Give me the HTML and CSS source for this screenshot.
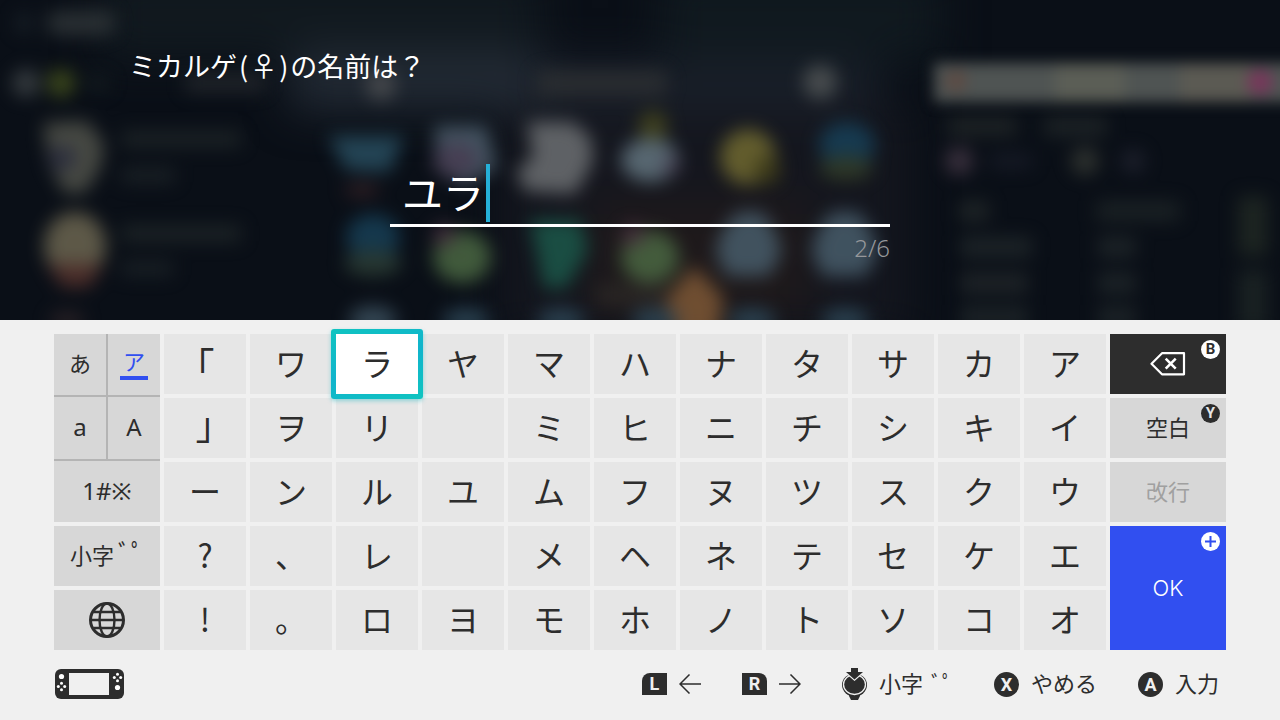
FILE: index.html
```
<!DOCTYPE html>
<html lang="ja">
<head>
<meta charset="utf-8">
<meta name="viewport" content="width=device-width, initial-scale=1">
<title>ミカルゲの名前入力</title>
<link rel="stylesheet" href="styles.css">
</head>
<body>
<main class="screen">
  <section class="prompt">
    <svg class="backdrop" viewBox="0 0 1280 320" preserveAspectRatio="xMidYMin slice" aria-hidden="true">
      <defs>
        <filter id="soft" x="-20%" y="-20%" width="140%" height="140%" color-interpolation-filters="sRGB"><feGaussianBlur stdDeviation="9"/></filter>
        <filter id="bar" x="-20%" y="-100%" width="140%" height="300%" color-interpolation-filters="sRGB"><feGaussianBlur stdDeviation="7"/></filter>
        <filter id="wide" x="-30%" y="-60%" width="160%" height="220%" color-interpolation-filters="sRGB"><feGaussianBlur stdDeviation="22"/></filter>
      </defs>
      <rect width="1280" height="320" fill="#0a0f17"/>
      <g filter="url(#wide)">
        <rect x="100" y="-30" width="440" height="90" fill="#11191f"/>
        <rect x="660" y="-30" width="280" height="90" fill="#10191f"/>
        <rect x="290" y="50" width="250" height="60" fill="#222a34"/>
        <rect x="540" y="60" width="340" height="50" fill="#191f29"/>
        <rect x="500" y="110" width="410" height="230" fill="#14161e"/>
        <rect x="590" y="200" width="220" height="120" fill="#1e191b"/>
      </g>
      <g filter="url(#soft)" opacity=".86">
        <rect x="16" y="14" width="16" height="18" fill="#1a2229"/>
        <rect x="47" y="11" width="68" height="24" rx="8" fill="#2f3538"/>
        <circle cx="26" cy="83" r="14" fill="#3c4245"/>
        <circle cx="61" cy="83" r="14" fill="#43501d"/>
        <rect x="87" y="75" width="22" height="16" fill="#141c20"/>
        <rect x="185" y="74" width="80" height="18" fill="#24282d"/>
        <circle cx="381" cy="85" r="15" fill="#4b4d50"/>
        <rect x="536" y="70" width="132" height="26" rx="8" fill="#2c2f32"/>
        <circle cx="820" cy="82" r="17" fill="#505455"/>

        <path d="M43 123l44-2 17 22-3 24-16 26-21 0-15-29z" fill="#50524a"/>
        <ellipse cx="62" cy="158" rx="13" ry="12" fill="#303244"/>
        <ellipse cx="75" cy="246" rx="31" ry="34" fill="#6b6550"/>
        <path d="M47 264h56l-13 23H62z" fill="#57332d"/>
        <ellipse cx="67" cy="320" rx="18" ry="8" fill="#312629"/>
        <rect x="121" y="131" width="120" height="16" fill="#1f2628"/>
        <rect x="121" y="168" width="54" height="15" fill="#1d2428"/>
        <rect x="121" y="225" width="120" height="17" fill="#1f2628"/>
        <rect x="121" y="261" width="52" height="15" fill="#1c2327"/>

        <path d="M328 136h76l-14 36-44-2z" fill="#284d5f"/>
        <ellipse cx="362" cy="190" rx="18" ry="7" fill="#382327"/>
        <path d="M434 126h52l11 42-33 18-26-15z" fill="#4d5f6d"/>
        <ellipse cx="456" cy="160" rx="23" ry="18" fill="#50475d"/>
        <path d="M527 122h46l18 16 2 24-18 32-50-3-9-20 17-14z" fill="#6b6e71"/>
        <circle cx="653" cy="126" r="15" fill="#45461e"/>
        <ellipse cx="650" cy="160" rx="29" ry="22" fill="#62747e"/>
        <circle cx="671" cy="165" r="9" fill="#534c60"/>
        <circle cx="748" cy="157" r="28" fill="#706930"/>
        <ellipse cx="767" cy="170" rx="13" ry="14" fill="#45421a"/>
        <ellipse cx="847" cy="145" rx="28" ry="23" fill="#174058"/>
        <ellipse cx="846" cy="168" rx="27" ry="12" fill="#333e29"/>

        <ellipse cx="373" cy="237" rx="27" ry="23" fill="#173f56"/>
        <ellipse cx="373" cy="263" rx="29" ry="13" fill="#2c3e36"/>
        <ellipse cx="462" cy="257" rx="29" ry="26" fill="#4a6742"/>
        <circle cx="444" cy="235" r="11" fill="#4b3342"/>
        <path d="M530 220h50l8 30-22 38h-22z" fill="#1b5749"/>
        <ellipse cx="650" cy="257" rx="29" ry="26" fill="#4a6742"/>
        <circle cx="633" cy="235" r="11" fill="#4b3342"/>
        <path d="M738 212h24q18 22 19 42l-12 22h-42l-11-22q1-22 22-42z" fill="#475c6a"/>
        <path d="M832 212h26q18 22 19 42l-12 22h-42l-11-22q1-22 20-42z" fill="#475c6a"/>
        <path d="M694 266l30 32-7 42h-44l-7-42z" fill="#7d5735"/>
        <rect x="596" y="284" width="70" height="22" fill="#2b2725"/>
        <ellipse cx="373" cy="320" rx="24" ry="14" fill="#3b505e"/>
        <ellipse cx="466" cy="320" rx="24" ry="12" fill="#2e4858"/>
        <ellipse cx="561" cy="320" rx="24" ry="12" fill="#2e4858"/>
        <ellipse cx="655" cy="320" rx="24" ry="12" fill="#2e4858"/>
        <ellipse cx="752" cy="320" rx="24" ry="12" fill="#2e4858"/>
        <ellipse cx="845" cy="320" rx="24" ry="12" fill="#2e4858"/>

        <rect x="947" y="117" width="70" height="19" fill="#212627"/>
        <rect x="1044" y="117" width="63" height="19" fill="#202628"/>
        <circle cx="959" cy="161" r="14" fill="#423644"/>
        <rect x="990" y="154" width="42" height="14" fill="#191d29"/>
        <circle cx="1085" cy="161" r="14" fill="#343833"/>
        <circle cx="1133" cy="161" r="12" fill="#20232f"/>
        <rect x="959" y="201" width="30" height="20" fill="#222829"/>
        <rect x="960" y="237" width="72" height="20" fill="#20272a"/>
        <rect x="960" y="273" width="68" height="20" fill="#22272a"/>
        <rect x="960" y="307" width="68" height="20" fill="#20272a"/>
        <rect x="1096" y="201" width="84" height="20" fill="#1d2426"/>
        <rect x="1098" y="237" width="38" height="20" fill="#20272a"/>
        <rect x="1098" y="273" width="38" height="20" fill="#20272a"/>
        <rect x="1098" y="307" width="38" height="20" fill="#20272a"/>
        <rect x="1238" y="196" width="30" height="60" fill="#202823"/>
        <rect x="1238" y="270" width="30" height="60" fill="#1c2424"/>
      </g>
      <g filter="url(#bar)">
        <rect x="934" y="63" width="380" height="39" fill="#4f5453"/>
        <rect x="1055" y="64" width="70" height="37" fill="#5b5e56"/>
        <rect x="1180" y="64" width="70" height="37" fill="#5b5a53"/>
        <circle cx="956" cy="81" r="11" fill="#5c4b44"/>
        <circle cx="1260" cy="82" r="13" fill="#75385a"/>
      </g>
    </svg>
    <label class="title" for="nickname">ミカルゲ<span class="paren">(</span>♀<span class="paren">)</span>の名前は？</label>
    <div class="field">
      <div class="entry"><input class="entry-text" id="nickname" type="text" maxlength="6" value="ユラ" autocomplete="off"><span class="caret"></span></div>
      <div class="count">2/6</div>
    </div>
  </section>

  <section class="keyboard" aria-label="キーボード">
    <div class="side">
      <div class="modes">
        <button class="mode" type="button">あ</button>
        <button class="mode mode-on" type="button" aria-pressed="true"><span class="mode-mark">ア</span></button>
        <button class="mode mode-latin" type="button">a</button>
        <button class="mode mode-latin" type="button">A</button>
        <button class="mode mode-latin mode-wide" type="button">1#※</button>
      </div>
      <button class="key key-side" type="button"><span>小字<span class="marks">ﾞﾟ</span></span></button>
      <button class="key key-icon" type="button" aria-label="言語">
        <svg width="36" height="36" viewBox="0 0 36 36" fill="none" stroke="#2d2d2d" stroke-width="2.4"><circle cx="18" cy="18" r="16.5" stroke-width="3"/><ellipse cx="18" cy="18" rx="7.5" ry="16.5"/><path d="M1.500 18h33M4.500 10h27M4.500 26h27"/></svg>
      </button>
    </div>

    <div class="kana">
      <button class="key key-bracket" type="button">｢</button><button class="key" type="button">ワ</button><button class="key key-focus" type="button">ラ</button><button class="key" type="button">ヤ</button><button class="key" type="button">マ</button><button class="key" type="button">ハ</button><button class="key" type="button">ナ</button><button class="key" type="button">タ</button><button class="key" type="button">サ</button><button class="key" type="button">カ</button><button class="key" type="button">ア</button>
      <button class="key key-bracket key-close" type="button">｣</button><button class="key" type="button">ヲ</button><button class="key" type="button">リ</button><button class="key" type="button" disabled aria-label="空き"></button><button class="key" type="button">ミ</button><button class="key" type="button">ヒ</button><button class="key" type="button">ニ</button><button class="key" type="button">チ</button><button class="key" type="button">シ</button><button class="key" type="button">キ</button><button class="key" type="button">イ</button>
      <button class="key" type="button">ー</button><button class="key" type="button">ン</button><button class="key" type="button">ル</button><button class="key" type="button">ユ</button><button class="key" type="button">ム</button><button class="key" type="button">フ</button><button class="key" type="button">ヌ</button><button class="key" type="button">ツ</button><button class="key" type="button">ス</button><button class="key" type="button">ク</button><button class="key" type="button">ウ</button>
      <button class="key" type="button">?</button><button class="key" type="button">、</button><button class="key" type="button">レ</button><button class="key" type="button" disabled aria-label="空き"></button><button class="key" type="button">メ</button><button class="key" type="button">ヘ</button><button class="key" type="button">ネ</button><button class="key" type="button">テ</button><button class="key" type="button">セ</button><button class="key" type="button">ケ</button><button class="key" type="button">エ</button>
      <button class="key" type="button">!</button><button class="key" type="button">。</button><button class="key" type="button">ロ</button><button class="key" type="button">ヨ</button><button class="key" type="button">モ</button><button class="key" type="button">ホ</button><button class="key" type="button">ノ</button><button class="key" type="button">ト</button><button class="key" type="button">ソ</button><button class="key" type="button">コ</button><button class="key" type="button">オ</button>
    </div>

    <div class="actions">
      <button class="key key-icon key-dark" type="button" aria-label="削除">
        <svg width="36" height="24" viewBox="0 0 36 24" fill="none" stroke="#fff" stroke-width="2.200"><path d="M12 1.200h22v21.100H12L1.500 11.700z" stroke-linejoin="round"/><path d="M15.700 6.700l10 10M25.700 6.700l-10 10" stroke-width="2.600"/></svg>
        <span class="badge badge-light">B</span>
      </button>
      <button class="key key-side" type="button">空白<span class="badge">Y</span></button>
      <button class="key key-side key-off" type="button" disabled>改行</button>
      <button class="key key-ok" type="button">OK
        <span class="badge badge-light"><svg width="11" height="11" viewBox="0 0 11 11" stroke="#314ff0" stroke-width="2"><path d="M5.500 0v11M0 5.500h11"/></svg></span>
      </button>
    </div>
  </section>

  <footer class="footer">
    <svg class="console" width="70" height="30" viewBox="0 0 70 30" aria-label="コントローラー" role="img">
      <rect x="1" width="69" height="30" rx="6" fill="#2d2d2d"/><path d="M15 4h40v22H15z" fill="#f0f0f0"/>
      <g fill="#fff"><circle cx="7.500" cy="7.500" r="2.600"/><circle cx="63.500" cy="18.500" r="2.600"/><circle cx="7.500" cy="14.300" r="1.500"/><circle cx="7.500" cy="20.700" r="1.500"/><circle cx="4.300" cy="17.500" r="1.500"/><circle cx="10.700" cy="17.500" r="1.500"/><circle cx="63.500" cy="5.300" r="1.500"/><circle cx="63.500" cy="11.700" r="1.500"/><circle cx="60.300" cy="8.500" r="1.500"/><circle cx="66.700" cy="8.500" r="1.500"/></g>
    </svg>
    <div class="hints">
      <div class="hint"><span class="shoulder shoulder-l">L</span><svg width="22" height="20" viewBox="0 0 22 20" fill="none" stroke="#2d2d2d" stroke-width="1.500"><path d="M22 10H1M10.500 .5L1 10l9.500 9.500"/></svg></div>
      <div class="hint"><span class="shoulder shoulder-r">R</span><svg width="22" height="20" viewBox="0 0 22 20" fill="none" stroke="#2d2d2d" stroke-width="1.500"><path d="M0 10h21M11.500 .5L21 10l-9.500 9.500"/></svg></div>
      <div class="hint">
        <svg width="25" height="32" viewBox="0 0 25 32"><path d="M2.500 21l4.500 5.500v1.500l2 4h7l2-4v-1.500l4.500-5.500z" fill="#2d2d2d"/><ellipse cx="12.500" cy="17" rx="12.500" ry="11.500" fill="#2d2d2d"/><ellipse cx="12.500" cy="16.600" rx="11" ry="9.900" fill="#2d2d2d" stroke="#f0f0f0" stroke-width="1.300"/><path d="M9 0h7v4h5l-8.500 7.500L4 4h5z" fill="#2d2d2d" stroke="#f0f0f0" stroke-width="2.400" paint-order="stroke"/></svg>
        <span class="hint-text">小字<span class="marks marks-small">ﾞﾟ</span></span>
      </div>
      <button class="hint" type="button"><span class="disc">X</span><span class="hint-text">やめる</span></button>
      <button class="hint" type="button"><span class="disc">A</span><span class="hint-text">入力</span></button>
    </div>
  </footer>
</main>
</body>
</html>
```
FILE: styles.css
```
* {
  box-sizing: border-box;
}

body {
  margin: 0;
  background: #f0f0f0;
  color: #2d2d2d;
  font-family: "Noto Sans CJK JP", sans-serif;
  font-size: 22px;
}

button,
input {
  margin: 0;
  padding: 0;
  border: 0;
  color: inherit;
  font: inherit;
}

svg {
  display: block;
}

.screen {
  min-height: 100vh;
}

/* Name prompt */
.prompt {
  position: relative;
  overflow: hidden;
  padding: 47px 129px 57px;
  background: #0a0f17;
  color: #fff;
}

.backdrop {
  position: absolute;
  inset: 0;
  width: 100%;
  height: 100%;
}

.title {
  position: relative;
  display: block;
  font-size: 27px;
  line-height: 38px;
}

.paren {
  padding: 0 2px;
}

.field {
  position: relative;
  max-width: 500px;
  margin: 79px auto 0;
}

.entry {
  display: flex;
  height: 63px;
  padding: 0 12px 2px;
  border-bottom: 3px solid #fff;
}

.entry-text {
  width: 84px;
  padding-bottom: 4px;
  background: none;
  outline: 0;
  font-size: 41px;
}

.caret {
  width: 4px;
  background: #25b0d8;
}

.count {
  margin-top: 6px;
  color: #96989b;
  font-family: "Noto Sans", sans-serif;
  font-size: 24px;
  font-weight: 300;
  line-height: 30px;
  text-align: right;
}

/* Keyboard */
.keyboard {
  display: grid;
  grid-template-columns: 106fr 942fr 116fr;
  gap: 4px;
  padding: 14px 54px 0;
}

.side,
.actions,
.kana {
  display: grid;
  grid-template-rows: repeat(5, 60px);
  gap: 4px;
}

.kana {
  grid-template-columns: repeat(11, 1fr);
}

.modes {
  grid-row: span 3;
  display: grid;
  grid-template-columns: 1fr 1fr;
  grid-template-rows: 61px 62px 61px;
  gap: 2px;
  background: #b4b4b4;
}

.mode {
  padding-bottom: 6px;
  background: #d7d7d7;
}

.mode-latin {
  padding-bottom: 2px;
  font-family: "Noto Sans", "Noto Sans CJK JP", sans-serif;
  font-size: 24px;
  line-height: 32px;
}

.mode-wide {
  grid-column: span 2;
}

.mode-on {
  color: #314ff0;
}

.mode-mark {
  display: inline-block;
  width: 28px;
  border-bottom: 4px solid #314ff0;
  line-height: 32px;
}

.key {
  position: relative;
  display: flex;
  align-items: center;
  justify-content: center;
  padding-bottom: 5px;
  background: #e6e6e6;
  font-size: 32px;
  line-height: 40px;
}

.key-side {
  background: #d7d7d7;
  font-size: 22px;
}

.key-icon {
  padding-bottom: 0;
  background: #d7d7d7;
}

.key-bracket {
  padding-bottom: 0;
  font-size: 38px;
}

.key-close {
  padding-bottom: 10px;
}

.key-focus {
  z-index: 1;
  margin: -5px;
  border: 5px solid transparent;
  border-radius: 3px;
  background: linear-gradient(#fff, #fff) padding-box, linear-gradient(160deg, #10c4c0, #10b4cc 50%, #10c4c0) border-box;
  box-shadow: 0 2px 4px #10b4c066;
}

.key-dark {
  background: #2d2d2d;
}

.key-off {
  color: #a0a0a0;
}

.key-ok {
  grid-row: span 2;
  padding-bottom: 0;
  background: #314ff0;
  color: #fff;
  font-family: Inter, sans-serif;
  font-size: 22px;
  font-weight: 300;
}

.marks {
  margin-left: 4px;
  font-size: 26px;
  line-height: 22px;
}

.marks-small {
  margin-left: 8px;
  font-size: 22px;
}

.badge {
  position: absolute;
  top: 6px;
  right: 6px;
  display: flex;
  align-items: center;
  justify-content: center;
  width: 19px;
  height: 19px;
  border-radius: 50%;
  background: #2d2d2d;
  color: #e6e6e6;
  font: bold 15px/19px Roboto, sans-serif;
}

.badge-light {
  background: #fff;
  color: #2d2d2d;
}

/* Control hints */
.footer {
  display: flex;
  align-items: center;
  justify-content: space-between;
  height: 68px;
  padding: 0 61px 0 54px;
}

.hints {
  display: flex;
  gap: 41px;
}

.hint {
  display: flex;
  align-items: center;
  gap: 12px;
  background: none;
  line-height: 32px;
}

.hint-text {
  padding-bottom: 4px;
}

.disc,
.shoulder {
  width: 25px;
  height: 25px;
  border-radius: 50%;
  background: #2d2d2d;
  color: #f0f0f0;
  font: bold 18px/25px Roboto, sans-serif;
  text-align: center;
}

.shoulder {
  height: 22px;
  line-height: 22px;
}

.shoulder-l {
  border-radius: 8px 0 0 0;
}

.shoulder-r {
  border-radius: 0 8px 0 0;
}
```
